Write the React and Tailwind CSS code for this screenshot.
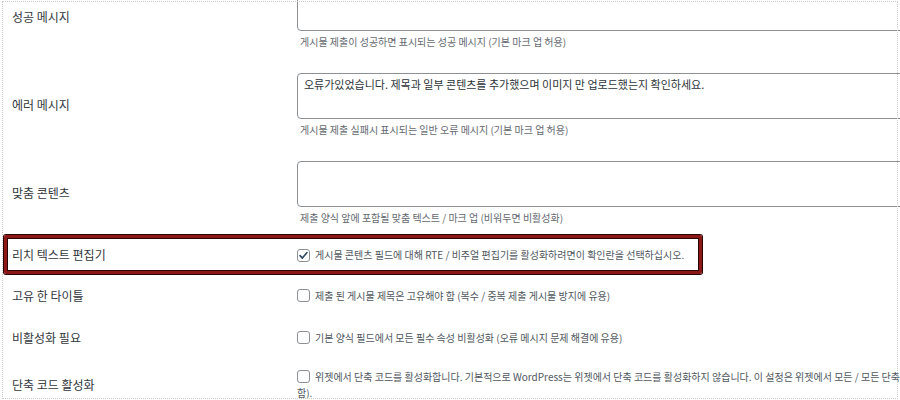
const fields = [
  {
    label: "성공 메시지",
    value: "",
    help: "게시물 제출이 성공하면 표시되는 성공 메시지 (기본 마크 업 허용)",
  },
  {
    label: "에러 메시지",
    value: "오류가있었습니다. 제목과 일부 콘텐츠를 추가했으며 이미지 만 업로드했는지 확인하세요.",
    help: "게시물 제출 실패시 표시되는 일반 오류 메시지 (기본 마크 업 허용)",
  },
  {
    label: "맞춤 콘텐츠",
    value: "",
    help: "제출 양식 앞에 포함될 맞춤 텍스트 / 마크 업 (비워두면 비활성화)",
  },
];

function Checkbox({ checked }) {
  return (
    <span className="inline-flex w-[13px] h-[13px] shrink-0 items-center justify-center rounded-[3px] border border-[#8c8f94] bg-white align-[-2px] mr-[5px]">
      {checked && (
        <svg viewBox="0 0 12 12" className="w-[11px] h-[11px]">
          <path d="M2.3 6.2 L4.8 8.8 L9.8 2.8" fill="none" stroke="#2f4a66" strokeWidth="1.8" strokeLinecap="round" strokeLinejoin="round" />
        </svg>
      )}
    </span>
  );
}

function TextRow({ field, first }) {
  return (
    <div className={"flex items-center pt-[15px] pb-[9px] " + (first ? "-mt-[30px]" : "")}>
      <div className="w-[297px] shrink-0 pl-[12px] text-[12px] text-[#32373c]">{field.label}</div>
      <div className="w-[640px] shrink-0 flex flex-col">
        <div className="h-[46px] rounded-[4px] border border-[#8c8f94] bg-white px-[6px] py-[3px] text-[11px] leading-[14px] text-[#2c3338]">
          {field.value}
        </div>
        <p className="mt-[4px] pl-[3px] text-[10px] leading-[14px] text-[#646970]">{field.help}</p>
      </div>
    </div>
  );
}

function CheckRow({ label, checked, children, className }) {
  return (
    <div className={"flex items-center py-[12px] " + (className || "")}>
      <div className="w-[297px] shrink-0 pl-[12px] text-[12px] text-[#32373c]">{label}</div>
      <div className="w-[640px] shrink-0 text-[10px] leading-4 text-[#50575e]">{children}</div>
    </div>
  );
}

export default function App() {
  return (
    <div className="relative w-[900px] h-[400px] overflow-hidden bg-white font-['Noto_Sans_CJK_KR','Noto_Sans',sans-serif]">
      <div className="flex flex-col">
        {fields.map((f, i) => (
          <TextRow key={f.label} field={f} first={i === 0} />
        ))}

        <div className="mt-px mb-px ml-[4px] w-[698px] h-[39px] flex items-center rounded-[2px] border-[3px] border-[#8b1717] shadow-[0_0_0_1px_#2a0303,inset_0_0_0_1px_#2a0303]">
          <div className="w-[290px] shrink-0 pl-[5px] text-[12px] text-[#32373c]">리치 텍스트 편집기</div>
          <div className="text-[10px] leading-4 text-[#50575e] whitespace-nowrap">
            <Checkbox checked />
            게시물 콘텐츠 필드에 대해 RTE / 비주얼 편집기를 활성화하려면이 확인란을 선택하십시오.
          </div>
        </div>

        <CheckRow label="고유 한 타이틀">
          <Checkbox />
          제출 된 게시물 제목은 고유해야 함 (복수 / 중복 제출 게시물 방지에 유용)
        </CheckRow>
        <CheckRow label="비활성화 필요">
          <Checkbox />
          기본 양식 필드에서 모든 필수 속성 비활성화 (오류 메시지 문제 해결에 유용)
        </CheckRow>
        <CheckRow label="단축 코드 활성화" className="pt-[10px]">
          <span className="whitespace-nowrap">
            <Checkbox />
            위젯에서 단축 코드를 활성화합니다. 기본적으로 WordPress는 위젯에서 단축 코드를 활성화하지 않습니다. 이 설정은 위젯에서 모든 / 모든 단축 코드를 활성화합니다 (위젯에서 단축 코드를 사용하려면 선택해야
          </span>
          <br />
          함).
        </CheckRow>
      </div>

      <div className="pointer-events-none absolute left-[2px] top-px right-[2px] bottom-px border border-dotted border-[#cdcdcd]" />
    </div>
  );
}
